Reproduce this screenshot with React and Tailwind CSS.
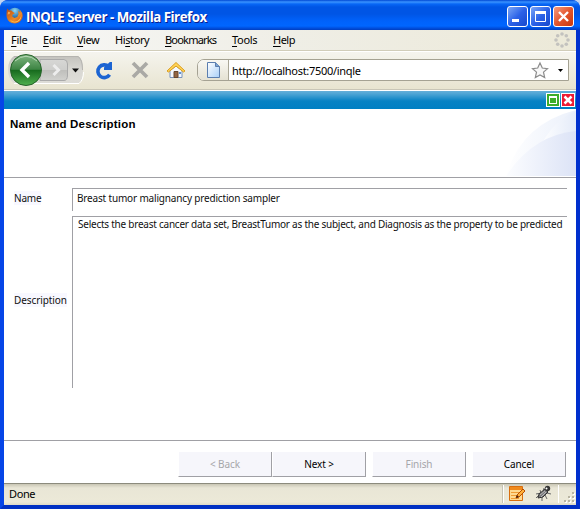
import React from "react";

const menus = [
  { label: "File", key: 0, cls: "w-[32px]" },
  { label: "Edit", key: 0, cls: "w-[34px]" },
  { label: "View", key: 0, cls: "w-[38px] tracking-[-0.5px]" },
  { label: "History", key: 2, cls: "w-[50px] tracking-[-0.4px]" },
  { label: "Bookmarks", key: 0, cls: "w-[67px] tracking-[-0.8px]" },
  { label: "Tools", key: 0, cls: "w-[41px]" },
  { label: "Help", key: 0, cls: "w-[30px] tracking-[-0.5px]" },
];

function FirefoxLogo() {
  return (
    <svg width="17" height="17" viewBox="0 0 16 16">
      <defs>
        <radialGradient id="globe" cx=".5" cy=".2" r=".8">
          <stop offset="0" stopColor="#8ed8f4" />
          <stop offset=".5" stopColor="#347eb8" />
          <stop offset="1" stopColor="#12336f" />
        </radialGradient>
        <linearGradient id="fox" x1="0" y1="0" x2="1" y2="1">
          <stop offset="0" stopColor="#b84a12" />
          <stop offset=".6" stopColor="#ed8b26" />
          <stop offset="1" stopColor="#c5461a" />
        </linearGradient>
      </defs>
      <circle cx="8.3" cy="7.5" r="6.8" fill="url(#globe)" />
      <path d="M1.2 1.5 2.6 3 5 3.2 6.7 4.8 8.4 5.8 6.3 7.1 5.8 8.7 7.8 10.3 10.6 9.4 11.8 6.5 11.2 3.4 13.4 5.2 13 2.5Q16.5 6 15.4 10 13.6 15.2 8.3 15.5 2 15.2.7 9.6 0 5.2 1.2 1.5Z" fill="url(#fox)" />
      <path d="M14 4.5q1.3 6-3.2 8.7-4.3 1.8-7-1.4 1.6 3.4 6.3 2.6 5.5-1.8 3.9-9.9" fill="#ffcf58" />
      <path d="M2 4.4 4.1 5 3.4 6.5 1.5 7Z" fill="#f8a445" />
    </svg>
  );
}

function WindowButton({ kind }) {
  const close = kind === "close";
  return (
    <div className={"h-[21px] w-[21px] rounded-[3px] border border-white " + (close ? "bg-linear-to-br from-[#f39a7d] via-[#e4562d] to-[#c83707]" : "bg-linear-to-br from-[#7ca5f5] via-[#2c62e8] to-[#1648cc]")}>
      <svg width="19" height="19" viewBox="0 0 19 19" fill="none" stroke="#fff">
        {kind === "min" && <path d="M4 13.5h7" strokeWidth="3" />}
        {kind === "max" && <><path d="M4.5 5v9.5h10V5" /><path d="M4 5.5h11" strokeWidth="3" /></>}
        {close && <path d="m5 5 9 9m0-9-9 9" strokeWidth="2.4" />}
      </svg>
    </div>
  );
}

function TitleBar() {
  return (
    <header className="flex h-[30px] items-start rounded-t-[7px] bg-[linear-gradient(180deg,#0048d4_0px,#3a93ff_2px,#0867f6_4px,#0055e5_7px,#0055e5_14px,#0062fb_21px,#0066ff_26px,#0050e0_28px,#003dc0_30px)] pl-[6px] pr-[6px] pt-[6px]">
      <div className="mt-[1px] h-4 w-4"><FirefoxLogo /></div>
      <h1 className="ml-[4px] flex-1 whitespace-nowrap font-['Open_Sans',sans-serif] text-[13.3px] font-bold leading-[23px] tracking-[-0.49px] text-white [text-shadow:1px_1px_0_#0b1c8e]">INQLE Server - Mozilla Firefox</h1>
      <div className="flex gap-[2px]">
        <WindowButton kind="min" />
        <WindowButton kind="max" />
        <WindowButton kind="close" />
      </div>
    </header>
  );
}

function MenuBar() {
  return (
    <nav className="flex h-[21px] shrink-0 border-b border-[#d1cdba] bg-linear-to-r from-[#f8f8f7] via-[#efeee6] to-[#ece9d8] pl-[7px] font-['Noto_Sans',sans-serif] text-[11px] leading-[20px] tracking-[-0.3px] text-black">
      {menus.map((m) => (
        <div key={m.label} className={"shrink-0 whitespace-nowrap " + m.cls}>
          {m.label.slice(0, m.key)}
          <span className="underline underline-offset-2">{m.label[m.key]}</span>
          {m.label.slice(m.key + 1)}
        </div>
      ))}
      <div className="flex flex-1 justify-end pr-[6px] pt-[2px]">
        <svg width="16" height="16" viewBox="0 0 16 16" fill="#c3c2be">
          <circle cx="8" cy="2" r="1.8" /><circle cx="12.3" cy="3.7" r="1.8" /><circle cx="14" cy="8" r="1.8" /><circle cx="12.3" cy="12.3" r="1.8" />
          <circle cx="8" cy="14" r="1.8" /><circle cx="3.7" cy="12.3" r="1.8" /><circle cx="2" cy="8" r="1.8" /><circle cx="3.7" cy="3.7" r="1.8" />
        </svg>
      </div>
    </nav>
  );
}

function HistoryButtons() {
  return (
    <svg width="78" height="34" viewBox="0 0 78 34">
      <defs>
        <linearGradient id="pill" x2="0" y2="1"><stop stopColor="#c3c2bd" /><stop offset=".5" stopColor="#d9d8d3" /><stop offset="1" stopColor="#deddd8" /></linearGradient>
        <linearGradient id="fwd" x2="0" y2="1"><stop stopColor="#d7d7d5" /><stop offset=".48" stopColor="#cececc" /><stop offset=".5" stopColor="#bebebb" /><stop offset="1" stopColor="#d2d2cf" /></linearGradient>
        <linearGradient id="back" x2="0" y2="1"><stop stopColor="#80b681" /><stop offset=".48" stopColor="#3d8443" /><stop offset=".5" stopColor="#16691d" /><stop offset="1" stopColor="#50b04e" /></linearGradient>
      </defs>
      <path d="M8 4H72Q77 6 77 18 77 29 73 31H8Q2 27 2 17.500 2 8 8 4Z" fill="url(#pill)" />
      <path d="M8 31.500H73Q77.500 28 77.500 20" stroke="#fff" fill="none" />
      <path d="M8 4.500H72Q76.500 7 76.500 18" stroke="#b5b4b0" fill="none" />
      <path d="M34 7.500H58Q61.500 8 61.500 12V23Q61.500 28.500 58 28.500H34Z" fill="url(#fwd)" stroke="#aaa" />
      <path d="m47.500 13 5 5-5 5" fill="none" stroke="#ededed" strokeWidth="3" />
      <circle cx="20" cy="18" r="15.500" fill="url(#back)" stroke="#27632b" />
      <path d="M9 9Q20-.5 31 9" stroke="#b8d8b6" fill="none" />
      <path d="m23 11-7 7 7 7" fill="none" stroke="#fff" strokeWidth="3.400" />
      <path d="M66 16.500h7L69.500 20.500Z" fill="#111" />
    </svg>
  );
}

function ToolBar() {
  return (
    <div className="flex h-[39px] shrink-0 items-start border-b border-[#c9c6b7] border-t border-t-white bg-linear-to-b from-[#f5f4ee] to-[#e8e4d0]">
      <div className="ml-[2px] mt-0 w-[78px]"><HistoryButtons /></div>
      <svg className="ml-[10px] mt-[9px] shrink-0" width="20" height="20" viewBox="0 0 20 20">
        <path d="M15.600 13.800A6.400 6.400 0 1 1 14.600 5.500" fill="none" stroke="#1c64d2" strokeWidth="3.600" />
        <path d="M18 1V9H10V6.500L15.800 1Z" fill="#1c64d2" />
      </svg>
      <svg className="ml-[17px] mt-[9px] shrink-0" width="18" height="18" viewBox="0 0 18 18">
        <path d="m2 2 14 14M16 2 2 16" stroke="#aaa9a5" strokeWidth="3.700" />
      </svg>
      <svg className="ml-[17px] mt-[9px] shrink-0" width="20" height="18" viewBox="0 0 20 18">
        <path d="M4 9.500 10 5l6 4.500V16.500H4Z" fill="#f5f9ff" stroke="#7893bc" />
        <path d="M8 10.500h4v6H8Z" fill="#936644" stroke="#68482e" /><path d="M13 11h2v2h-2z" fill="#5e92cf" />
        <path d="M1 10 10 1.500 19 10 17.500 11 10 5 2.500 11Z" fill="#ffd457" stroke="#dc9d1e" />
      </svg>
      <div className="ml-[11px] mt-[7px] flex h-[22px] w-[372px] overflow-hidden rounded-l-[7px] border border-[#a5a293] bg-white">
        <div className="flex w-[31px] justify-center border-r border-[#aaa797] bg-linear-to-b from-[#f9f8f3] to-[#e5e2d3] pt-[2px]">
          <svg width="13" height="16" viewBox="0 0 13 16">
            <defs><linearGradient id="page" x2="1" y2="1"><stop stopColor="#fff" /><stop offset="1" stopColor="#a9d0f9" /></linearGradient></defs>
            <path d="M.5.500H8.500L12.500 4.500V15.500H.5Z" fill="url(#page)" stroke="#5b7eaf" /><path d="M8.500.5v4h4" fill="#7ba2d1" stroke="#5b7eaf" />
          </svg>
        </div>
        <span className="ml-[3px] flex-1 whitespace-nowrap font-['Noto_Sans',sans-serif] text-[11px] leading-[21px] tracking-[-0.3px]">http://localhost:7500/inqle</span>
        <svg className="mr-[5px] mt-[1px]" width="33" height="18" viewBox="0 0 33 18">
          <path d="m10 2 2.300 5 5.200.600-4 3.500 1.200 5.400L10 14l-4.700 2.500 1.200-5.400-4-3.500L7.700 7Z" fill="#f8f8f8" stroke="#8c8c8c" strokeWidth="1.200" />
          <path d="M28 8h5l-2.500 3Z" fill="#000" />
        </svg>
      </div>
    </div>
  );
}

function AppBar() {
  return (
    <div className="mt-[1px] flex h-[18px] shrink-0 justify-end gap-[1px] bg-[linear-gradient(180deg,#65afd9_0,#4da4d5_3px,#0782c4_10px,#007fc3_18px)] pr-px pt-[2px]">
      <div className="h-[14px] w-[14px] border border-white bg-[#3dad2a] p-[2px]"><div className="h-2 w-2 border border-t-2 border-white" /></div>
      <div className="h-[14px] w-[14px] border border-white bg-[#ed1c34]">
        <svg width="12" height="12" viewBox="0 0 12 12"><path d="m2.500 2.500 7 7m0-7-7 7" stroke="#fff" strokeWidth="2.500" /></svg>
      </div>
    </div>
  );
}

function Heading() {
  return (
    <section className="flex h-[69px] shrink-0 justify-between border-b border-[#a0a0a5] bg-white">
      <h2 className="ml-[6px] mt-[8px] whitespace-nowrap font-['Liberation_Sans',sans-serif] text-[11.5px] font-bold leading-[14px] tracking-[0.21px] text-black">Name and Description</h2>
      <svg width="70" height="67" viewBox="0 0 70 67">
        <defs>
          <linearGradient id="arc1"><stop stopColor="#fff" /><stop offset="1" stopColor="#e4ebf9" /></linearGradient>
          <linearGradient id="arc2"><stop stopColor="#fcfdff" /><stop offset="1" stopColor="#dce3f6" /></linearGradient>
        </defs>
        <path d="M0 67Q15 15 70 1V67Z" fill="url(#arc1)" opacity=".75" />
        <path d="M33 40Q47 11 70 2V40Z" fill="url(#arc1)" />
        <path d="M0 67Q27 26 70 22V67Z" fill="url(#arc2)" />
      </svg>
    </section>
  );
}

function Form() {
  return (
    <main className="grid h-[263px] shrink-0 grid-cols-[58px_495px] grid-rows-[23px_172px] content-start gap-y-[5px] border-b border-[#a0a0a5] bg-white pl-[10px] pt-[10px] font-['Noto_Sans',sans-serif] text-[10px] text-[#101010]">
      <label className="mt-[3px] whitespace-nowrap leading-[15px] tracking-[-0.2px]"><span className="bg-[#f8f8ff]">Name</span></label>
      <div className="overflow-hidden whitespace-nowrap border-l border-t border-[#a0a0a5] pl-[4px] leading-[19px] tracking-[-0.17px]">Breast tumor malignancy prediction sampler</div>
      <label className="mt-[77px] whitespace-nowrap leading-[15px] tracking-[-0.1px]"><span className="bg-[#f8f8ff]">Description</span></label>
      <div className="overflow-hidden whitespace-nowrap border-l border-t border-[#a0a0a5] pl-[5px] leading-[15px] tracking-[-0.24px]">Selects the breast cancer data set, BreastTumor as the subject, and Diagnosis as the property to be predicted</div>
    </main>
  );
}

function Button({ children, disabled }) {
  return (
    <button disabled={disabled} className={"h-[25px] w-[94px] border-b border-r border-[#a0a0a5] border-l border-l-white bg-[#f6f6fb] text-center text-[10px] leading-[24px] tracking-[-0.1px] " + (disabled ? "text-[#a6a6aa]" : "text-black")}>{children}</button>
  );
}

function StatusBar() {
  return (
    <footer className="flex h-[22px] shrink-0 items-start border-t border-[#8c8b7d] bg-[linear-gradient(180deg,#c9c6b4_0,#e9e6d6_4px,#ece9d8_18px,#d9d5c1_22px)] pl-[5px] font-['Noto_Sans',sans-serif] text-[11px] leading-[20px] tracking-[-0.4px]">
      <span className="flex-1">Done</span>
      <div className="mt-[1px] flex h-[18px] w-[56px] items-start justify-between border-l border-r border-white pl-[5px] pr-[6px] shadow-[-1px_0_#c7c4b4]">
        <svg width="17" height="17" viewBox="0 0 17 17">
          <path d="M.5 1.500h13v14H.5Z" fill="#ffda91" stroke="#d96e0e" /><path d="M1 2h12v3H1Z" fill="#f08a1c" />
          <path d="M2 7.500h10m-10 3h8m-8 3h8" stroke="#ee9d35" /><path d="m7 13 1-3 6-6 2 2-6 6Z" fill="#ffb13a" stroke="#b64c00" /><path d="m7 13 1-3 2 2Z" fill="#402311" />
        </svg>
        <svg width="17" height="17" viewBox="0 0 17 17">
          <path d="m5 5 1 3-5 1m8-6-1 4m4 1 4 1m-6 1 2 4m-5-3v5m-3-6-3 3" fill="none" stroke="#666" />
          <path d="m3 13 1-4 6-5 3 3-5 5Z" fill="#77777a" stroke="#333" /><path d="m5 10 5-4m-4 6 5-5" stroke="#b8b8b8" />
          <circle cx="12.500" cy="3.500" r="2.700" fill="#353535" /><circle cx="11.500" cy="3.500" r="1" fill="#fff" />
        </svg>
      </div>
      <svg className="ml-[5px] mt-[8px] shrink-0" width="12" height="13" viewBox="0 0 12 13">
        <path d="M9 1h2v2H9zM5 5h2v2H5zM9 5h2v2H9zM1 9h2v2H1zM5 9h2v2H5zM9 9h2v2H9z" fill="#fff" />
        <path d="M8 0h2v2H8zM4 4h2v2H4zM8 4h2v2H8zM0 8h2v2H0zM4 8h2v2H4zM8 8h2v2H8z" fill="#b8b4a2" />
      </svg>
    </footer>
  );
}

export default function App() {
  return (
    <div className="h-[509px] w-[580px] overflow-hidden bg-[#c2d5f2]">
      <div className="flex h-[509px] flex-col overflow-hidden rounded-t-[8px] bg-[#0045e4]">
        <TitleBar />
        <div className="flex h-[479px] flex-col border-4 border-t-0 border-b-[#0030c3] border-l-[#0645e7] border-r-[#0030ce] bg-white">
          <MenuBar />
          <ToolBar />
          <AppBar />
          <Heading />
          <Form />
          <div className="flex h-[42px] shrink-0 justify-end bg-white pr-[10px] pt-[11px] font-['Noto_Sans',sans-serif]">
            <Button disabled>&lt; Back</Button>
            <Button>Next &gt;</Button>
            <div className="ml-[6px] flex gap-[6px]"><Button disabled>Finish</Button><Button>Cancel</Button></div>
          </div>
          <StatusBar />
        </div>
      </div>
    </div>
  );
}
